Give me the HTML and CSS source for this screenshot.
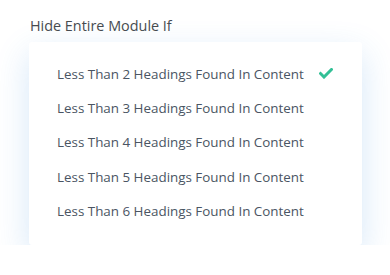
FILE: index.html
```html
<!DOCTYPE html>
<html lang="en">
<head>
    <meta charset="UTF-8">
    <title>Hide Entire Module If</title>
    <link rel="stylesheet" href="styles.css">
</head>
<body>
    <div class="field">
        <label class="field-label">Hide Entire Module If</label>
        <ul class="options">
            <li class="option selected">
                <span>Less Than 2 Headings Found In Content</span>
                <svg class="check" width="14" height="11" viewBox="0 0 14 11">
                    <path d="M1.5 5.5 L5 9 L12.5 1.5" fill="none" stroke="#32c096" stroke-width="3" stroke-linecap="square"/>
                </svg>
            </li>
            <li class="option"><span>Less Than 3 Headings Found In Content</span></li>
            <li class="option"><span>Less Than 4 Headings Found In Content</span></li>
            <li class="option"><span>Less Than 5 Headings Found In Content</span></li>
            <li class="option"><span>Less Than 6 Headings Found In Content</span></li>
        </ul>
    </div>
</body>
</html>
```

FILE: styles.css
```css
* {
    padding: 0;
    margin: 0;
    box-sizing: border-box;
}
body {
    background: #fff;
    font-family: "Open Sans", "Noto Sans", sans-serif;
}
.field {
    padding: 16px 0 0 29px;
}
.field-label {
    display: block;
    font-size: 14.4px;
    line-height: 20px;
    color: #474b50;
    padding-left: 1px;
}
.options {
    list-style: none;
    width: 333px;
    margin-top: 6px;
    padding: 15px 0 17px 28px;
    background: #fff;
    border-radius: 3px;
    box-shadow: 0 12px 34px rgba(43, 135, 218, 0.2);
}
.option {
    display: flex;
    align-items: center;
    height: 34.2px;
    font-size: 13.4px;
    color: #4a5563;
}
.check {
    margin-left: 15px;
    margin-top: -2px;
}
```
